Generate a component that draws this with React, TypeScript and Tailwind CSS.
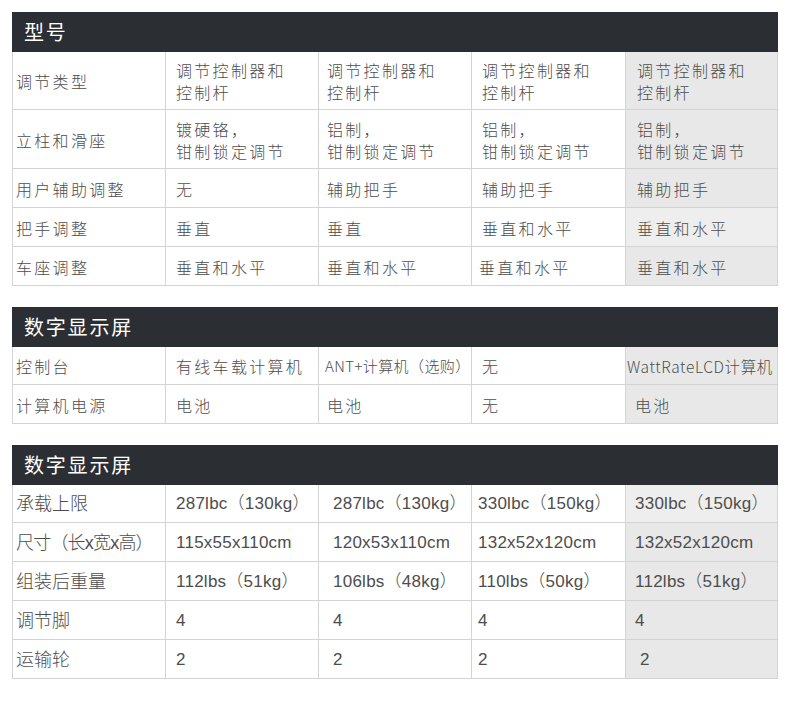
type Cell = string | { t: string; cls: string };

type Row = { h: string; cells: Cell[]; lastBg?: string };

const cjk = "font-['Noto_Sans_CJK_SC',sans-serif]";
const mixed = "font-['Liberation_Sans','Noto_Sans_CJK_SC',sans-serif]";

// 每个区块各列的左内边距
const pads1 = ['pl-[3px]', 'pl-[10px]', 'pl-[8px]', 'pl-[10px]', 'pl-[11px]'];
const pads3 = ['pl-[3px]', 'pl-[10px]', 'pl-[14px]', 'pl-[6px]', 'pl-[9px]'];

const lbl3 = 'pl-[3px] text-[18px] tracking-[0px]';

const sections = [
  {
    title: '型号',
    font: cjk,
    text: 'text-[16px] tracking-[2.3px]',
    pads: pads1,
    rows: [
      {
        h: 'h-[58px]',
        cells: ['调节类型', '调节控制器和\n控制杆', '调节控制器和\n控制杆', '调节控制器和\n控制杆', '调节控制器和\n控制杆'],
      },
      {
        h: 'h-[59px]',
        cells: ['立柱和滑座', '镀硬铬，\n钳制锁定调节', '铝制，\n钳制锁定调节', '铝制，\n钳制锁定调节', '铝制，\n钳制锁定调节'],
      },
      { h: 'h-[39px]', cells: ['用户辅助调整', '无', '辅助把手', '辅助把手', '辅助把手'] },
      { h: 'h-[39px]', cells: ['把手调整', '垂直', '垂直', '垂直和水平', '垂直和水平'], lastBg: 'bg-[#eeeeee]' },
      { h: 'h-[39px]', cells: ['车座调整', '垂直和水平', '垂直和水平', { t: '垂直和水平', cls: 'pl-[7px] text-[16px] tracking-[2.3px]' }, '垂直和水平'] },
    ] as Row[],
  },
  {
    title: '数字显示屏',
    font: cjk,
    text: 'text-[16px] tracking-[2.3px]',
    pads: pads1,
    rows: [
      {
        h: 'h-[38px]',
        cells: [
          '控制台',
          '有线车载计算机',
          { t: 'ANT+计算机（选购）', cls: 'pl-[6px] text-[15px] tracking-[0.4px]' },
          '无',
          { t: 'WattRateLCD计算机', cls: 'pl-[1px] text-[15.5px] tracking-[0.6px] whitespace-nowrap' },
        ],
      },
      { h: 'h-[39px]', cells: ['计算机电源', '电池', '电池', '无', { t: '电池', cls: 'pl-[9px] text-[16px] tracking-[2.3px]' }] },
    ] as Row[],
  },
  {
    title: '数字显示屏',
    font: mixed,
    text: 'text-[17px] tracking-[0.25px]',
    pads: pads3,
    rows: [
      {
        h: 'h-[38px]',
        cells: [{ t: '承载上限', cls: lbl3 }, '287lbc（130kg）', '287lbc（130kg）', '330lbc（150kg）', '330lbc（150kg）'],
        lastBg: 'bg-[#eeeeee]',
      },
      {
        h: 'h-[39px]',
        cells: [
          { t: '尺寸（长x宽x高）', cls: 'pl-[3px] text-[18px] tracking-[-0.8px]' },
          '115x55x110cm',
          '120x53x110cm',
          '132x52x120cm',
          '132x52x120cm',
        ],
      },
      { h: 'h-[39px]', cells: [{ t: '组装后重量', cls: lbl3 }, '112lbs（51kg）', '106lbs（48kg）', '110lbs（50kg）', '112lbs（51kg）'] },
      { h: 'h-[39px]', cells: [{ t: '调节脚', cls: lbl3 }, '4', '4', '4', '4'] },
      { h: 'h-[39px]', cells: [{ t: '运输轮', cls: lbl3 }, '2', '2', '2', { t: '2', cls: 'pl-[14px] text-[17px]' }] },
    ] as Row[],
  },
];

export default function App() {
  return (
    <div className="min-h-screen w-[790px] bg-white pt-[12px] pb-[40px]">
      {sections.map((sec, si) => (
        <div key={si} className={`ml-[12px] w-[766px] ${si > 0 ? 'mt-[21px]' : ''} ${sec.font}`}>
          {/* 标题栏 */}
          <div className={`flex h-[40px] items-center bg-[#2b2e33] pl-[12px] text-[20px] font-normal tracking-[1.8px] text-white ${cjk}`}>
            {sec.title}
          </div>
          <div className="border-l border-[#d4d4d4]">
            {sec.rows.map((row, ri) => (
              <div
                key={ri}
                className={`grid grid-cols-[153px_153px_153px_154px_152px] border-b border-[#d4d4d4] ${row.h}`}
              >
                {row.cells.map((c, ci) => {
                  const t = typeof c === 'string' ? c : c.t;
                  const extra = typeof c === 'string' ? sec.pads[ci] + ' ' + sec.text : c.cls;
                  const bg = ci === 4 ? row.lastBg ?? 'bg-[#e8e8e8]' : '';
                  return (
                    <div
                      key={ci}
                      className={`flex items-center whitespace-pre-line border-r border-[#d4d4d4] pt-[1px] font-light leading-[22px] text-[#4d4d4d] ${extra} ${bg}`}
                    >
                      {t}
                    </div>
                  );
                })}
              </div>
            ))}
          </div>
        </div>
      ))}
    </div>
  );
}
